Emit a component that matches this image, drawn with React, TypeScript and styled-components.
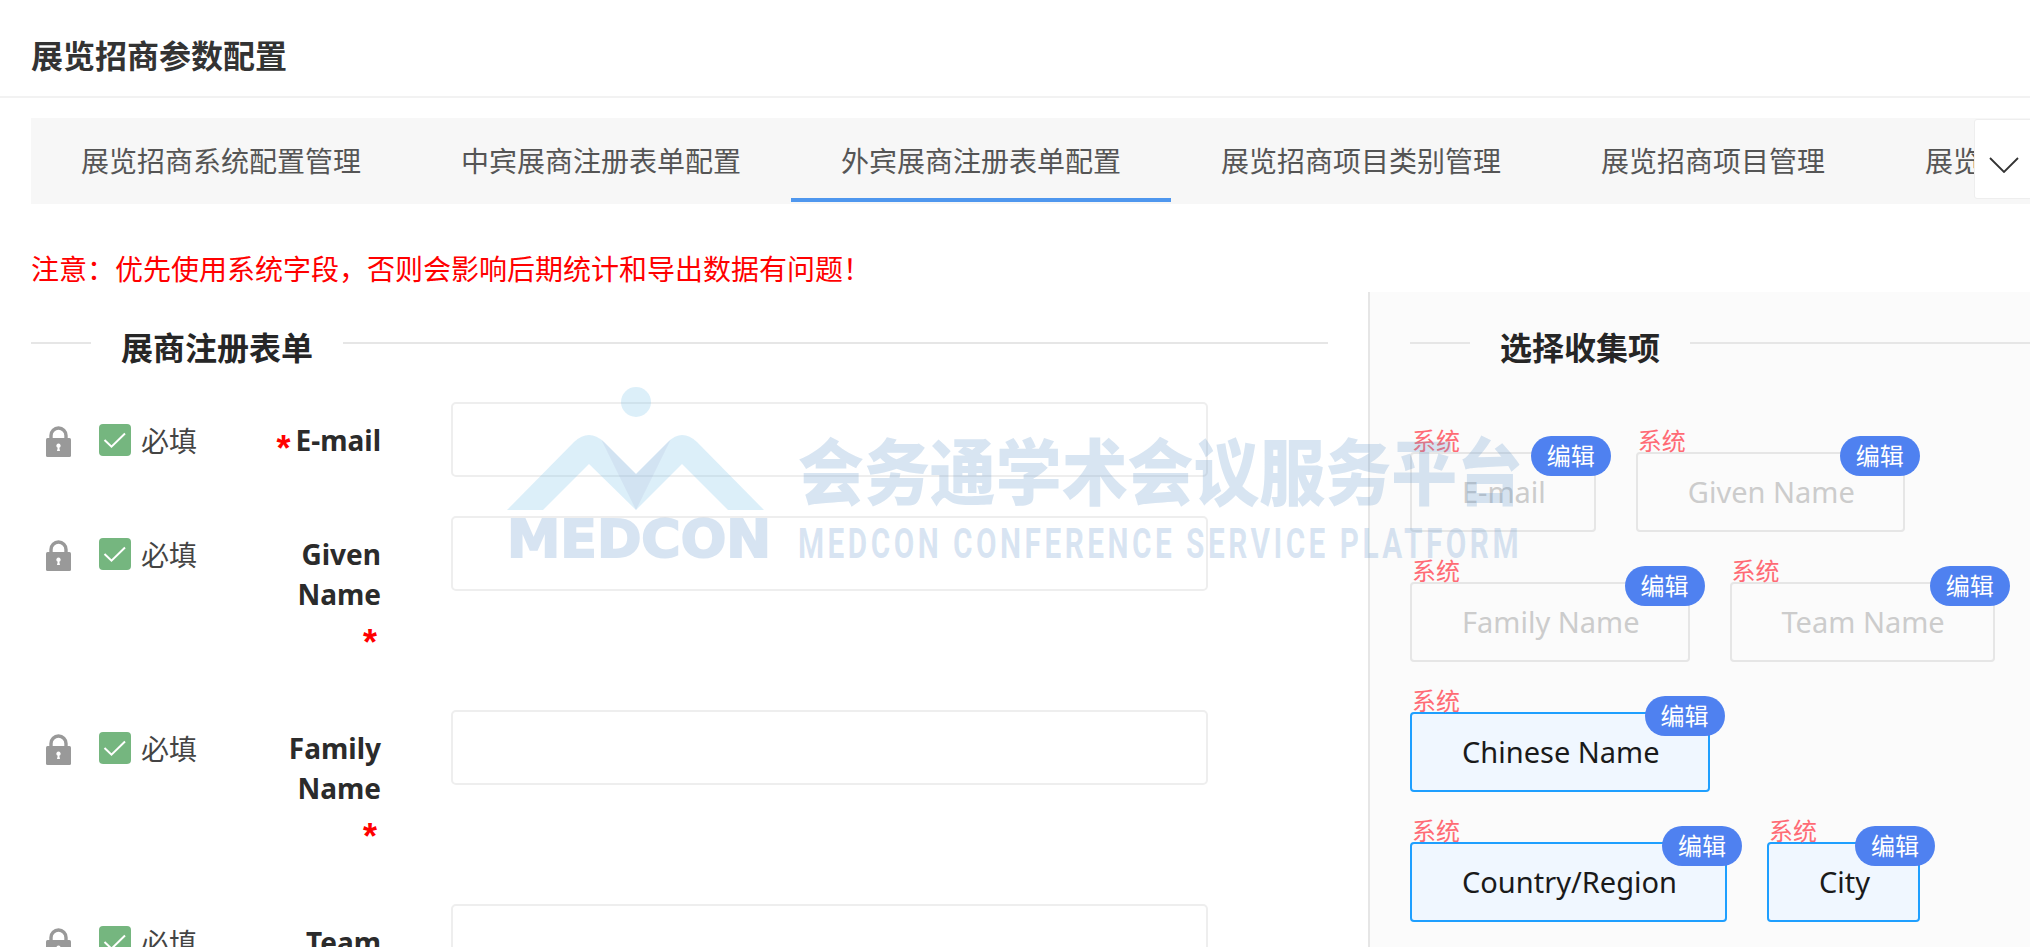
import React from 'react';
import styled, { createGlobalStyle } from 'styled-components';

const GlobalStyle = createGlobalStyle`
  html, body {
    margin: 0;
    padding: 0;
    background: #fff;
    font-family: "Noto Sans", "Noto Sans CJK SC", sans-serif;
  }
  * { box-sizing: border-box; }
`;

const Page = styled.div`
  position: relative;
  height: 100vh;
  overflow: hidden;
  display: flex;
  flex-direction: column;
`;

const Header = styled.div`
  height: 98px;
  padding: 34px 31px 0;
  border-bottom: 2px solid #f2f2f2;
`;

const PageTitle = styled.div`
  font-size: 32px;
  line-height: 44px;
  font-weight: 700;
  color: #333;
`;

const TabBar = styled.div`
  position: relative;
  display: flex;
  height: 86px;
  margin: 20px 0 0 31px;
  background: #f7f7f7;
  overflow: hidden;
`;

const Tab = styled.div<{ $active?: boolean }>`
  flex-shrink: 0;
  height: 84px;
  padding: 0 50px;
  font-size: 28px;
  line-height: 86px;
  color: #555;
  white-space: nowrap;
  border-bottom: 4px solid ${p => (p.$active ? '#4f97ee' : 'transparent')};
`;

const TabMore = styled.div`
  position: absolute;
  top: 1px;
  right: -10px;
  width: 66px;
  height: 80px;
  display: flex;
  align-items: center;
  padding: 11px 0 0 14px;
  background: #fff;
  border: 1px solid #eee;
  border-radius: 3px;
`;

const Warning = styled.div`
  padding: 45px 0 0 31px;
  font-size: 28px;
  line-height: 40px;
  color: #f00;
`;

const Body = styled.div`
  flex: 1;
  display: flex;
  margin-top: 3px;
  min-height: 0;
`;

const FormColumn = styled.div`
  width: 1368px;
  padding: 31px 40px 0 31px;
`;

const PickerColumn = styled.div`
  flex: 1;
  padding: 31px 0 0 40px;
  background: #fbfbfb;
  border-left: 2px solid #e6e6e6;
`;

const SectionHead = styled.div`
  display: flex;
  align-items: flex-start;
`;

const HeadLine = styled.div<{ $grow?: boolean }>`
  height: 2px;
  margin-top: 19px;
  background: #e6e6e6;
  ${p => (p.$grow ? 'flex: 1;' : 'width: 60px;')}
`;

const HeadTitle = styled.div`
  margin: 0 30px;
  font-size: 32px;
  line-height: 50px;
  font-weight: 700;
  color: #262626;
`;

const FormList = styled.div`
  margin-top: 29px;
`;

const FormRow = styled.div`
  display: flex;
  align-items: flex-start;
  padding-left: 15px;
  margin-bottom: 39px;
`;

const LockIcon = styled.svg`
  flex-shrink: 0;
  width: 25px;
  height: 31px;
  margin-top: 24px;
`;

const CheckIcon = styled.svg`
  flex-shrink: 0;
  width: 32px;
  height: 32px;
  margin: 22px 0 0 28px;
`;

const RequiredText = styled.div`
  flex-shrink: 0;
  width: 56px;
  margin-left: 10px;
  padding-top: 19px;
  font-size: 28px;
  line-height: 40px;
  color: #444;
`;

const FieldLabel = styled.div`
  flex-shrink: 0;
  width: 120px;
  margin-left: 64px;
  padding: 18px 0 17px;
  font-size: 28px;
  line-height: 40px;
  font-weight: 700;
  color: #2b2b2b;
  text-align: right;
`;

const Star = styled.span<{ $below?: boolean }>`
  display: ${p => (p.$below ? 'block' : 'inline-block')};
  height: 40px;
  padding-right: ${p => (p.$below ? '4px' : '0')};
  margin-right: ${p => (p.$below ? '0' : '5px')};
  font-family: "Liberation Sans", sans-serif;
  font-size: 36px;
  line-height: 58px;
  vertical-align: top;
  color: #f00;
`;

const TextBox = styled.input`
  flex-shrink: 0;
  width: 757px;
  height: 75px;
  margin-left: 70px;
  background: transparent;
  border: 2px solid #eee;
  border-radius: 5px;
  outline: none;
`;

const PickerGrid = styled.div`
  display: flex;
  flex-wrap: wrap;
  gap: 50px 40px;
  margin-top: 79px;
`;

const PickerItem = styled.div<{ $picked?: boolean }>`
  position: relative;
  height: 80px;
  padding: 0 48px 0 50px;
  font-size: 29px;
  line-height: 76px;
  white-space: nowrap;
  border-radius: 4px;
  border: 2px solid ${p => (p.$picked ? '#1e9fff' : '#e6e6e6')};
  background: ${p => (p.$picked ? '#f0f7ff' : 'transparent')};
  color: ${p => (p.$picked ? '#1a1a1a' : '#ccc')};
`;

const SystemTag = styled.span`
  position: absolute;
  top: -27px;
  left: 0;
  font-size: 24px;
  line-height: 28px;
  color: #ff6b75;
`;

const EditBadge = styled.span`
  position: absolute;
  top: -18px;
  right: -17px;
  width: 80px;
  height: 40px;
  border-radius: 20px;
  background: #4f81f0;
  color: #fff;
  font-size: 24px;
  line-height: 40px;
  text-align: center;
`;

const Watermark = styled.svg`
  position: absolute;
  left: 500px;
  top: 380px;
  width: 1030px;
  height: 190px;
  pointer-events: none;
`;

const WM_FILL = 'rgba(100,150,205,0.25)';

const formFields = [
  { words: 'E-mail', inlineStar: true },
  { words: 'Given Name' },
  { words: 'Family Name' },
  { words: 'Team Name' },
];

const pickerFields = [
  { name: 'E-mail' },
  { name: 'Given Name' },
  { name: 'Family Name' },
  { name: 'Team Name' },
  { name: 'Chinese Name', picked: true },
  { name: 'Country/Region', picked: true },
  { name: 'City', picked: true },
];

const tabs = ['展览招商系统配置管理', '中宾展商注册表单配置', '外宾展商注册表单配置', '展览招商项目类别管理', '展览招商项目管理', '展览招商项目审核'];

const Lock = () => (
  <LockIcon viewBox="0 0 25 31">
    <path d="M5 13V9.5a7.5 7.5 0 0 1 15 0V13" fill="none" stroke="#999" strokeWidth="3.4" />
    <rect x="0" y="12" width="25" height="19" rx="1.5" fill="#999" />
    <path d="M11 25l.7-3.2a2.2 2.2 0 1 1 1.6 0L14 25z" fill="#fff" />
  </LockIcon>
);

const Check = () => (
  <CheckIcon viewBox="0 0 32 32">
    <rect width="32" height="32" rx="4" fill="#75b67f" />
    <path d="M5.5 16l7 6.7L26 9.5" fill="none" stroke="#fff" strokeWidth="2" />
  </CheckIcon>
);

export default function App() {
  return (
    <Page>
      <GlobalStyle />
      <Header>
        <PageTitle>展览招商参数配置</PageTitle>
      </Header>
      <TabBar>
        {tabs.map((t, i) => (
          <Tab key={t} $active={i === 2}>{t}</Tab>
        ))}
        <TabMore>
          <svg width="30" height="16" viewBox="0 0 30 16">
            <path d="M1 1l14 14L29 1" fill="none" stroke="#333" strokeWidth="1.8" />
          </svg>
        </TabMore>
      </TabBar>
      <Warning>注意：优先使用系统字段，否则会影响后期统计和导出数据有问题！</Warning>
      <Body>
        <FormColumn>
          <SectionHead>
            <HeadLine />
            <HeadTitle>展商注册表单</HeadTitle>
            <HeadLine $grow />
          </SectionHead>
          <FormList>
            {formFields.map(f => (
              <FormRow key={f.words}>
                <Lock />
                <Check />
                <RequiredText>必填</RequiredText>
                <FieldLabel>
                  {f.inlineStar && <Star>*</Star>}
                  {f.words}
                  {!f.inlineStar && <Star $below>*</Star>}
                </FieldLabel>
                <TextBox readOnly />
              </FormRow>
            ))}
          </FormList>
        </FormColumn>
        <PickerColumn>
          <SectionHead>
            <HeadLine />
            <HeadTitle>选择收集项</HeadTitle>
            <HeadLine $grow />
          </SectionHead>
          <PickerGrid>
            {pickerFields.map(f => (
              <PickerItem key={f.name} $picked={f.picked}>
                <SystemTag>系统</SystemTag>
                {f.name}
                <EditBadge>编辑</EditBadge>
              </PickerItem>
            ))}
          </PickerGrid>
        </PickerColumn>
      </Body>
      <Watermark viewBox="500 380 1030 190">
        <circle cx="636" cy="402" r="15" fill="rgba(110,190,230,0.24)" />
        <path
          d="M507 510L574 442Q589 428 604 442L636 474L668 442Q682 428 697 442L764 510H728L682 464L636 510L589 464L543 510Z"
          fill="rgba(110,190,230,0.24)"
        />
        <path d="M601 439L636 474V510Z M671 439L636 474V510Z" fill="rgba(130,130,190,0.1)" />
        <text x="507" y="557" fontFamily="DejaVu Sans" fontWeight="700" fontSize="52" textLength="264" lengthAdjust="spacingAndGlyphs" fill="#6496cd" stroke="#6496cd" strokeWidth="2" opacity="0.25">MEDCON</text>
        <text x="798" y="499" fontFamily="Noto Sans CJK SC" fontWeight="900" fontSize="72" textLength="725" lengthAdjust="spacingAndGlyphs" fill={WM_FILL}>会务通学术会议服务平台</text>
        <text x="798" y="558" fontFamily="Roboto" fontWeight="700" fontSize="43" letterSpacing="5" textLength="724" lengthAdjust="spacingAndGlyphs" fill={WM_FILL}>MEDCON CONFERENCE SERVICE PLATFORM</text>
      </Watermark>
    </Page>
  );
}
